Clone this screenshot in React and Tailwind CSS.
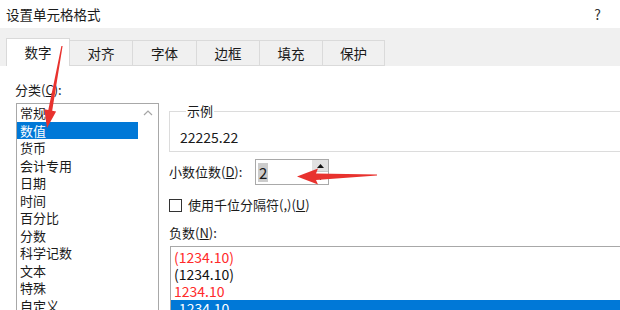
import React from 'react'

const categories = ['常规', '数值', '货币', '会计专用', '日期', '时间', '百分比', '分数', '科学记数', '文本', '特殊', '自定义']
const tabs = [
    { label: '对齐', w: 'w-[63px]' },
    { label: '字体', w: 'w-[64px]' },
    { label: '边框', w: 'w-[63px]' },
    { label: '填充', w: 'w-[63px]' },
    { label: '保护', w: 'w-[62px]' },
]
const negatives = [
    { text: '(1234.10)', cls: 'text-[#ff2a2a]' },
    { text: '(1234.10)', cls: 'text-[#111]' },
    { text: '1234.10', cls: 'text-[#ff2a2a]' },
    { text: '-1234.10', cls: 'text-white bg-[#0078d7]' },
]

export default function App() {
    return (
        <div className="relative w-[620px] h-[310px] overflow-hidden bg-white text-[#1a1a1a] text-[13px] font-['Noto_Sans_CJK_SC',sans-serif]">
            {/* 标题栏 */}
            <div className="h-[28px] flex items-center justify-between pl-[6px] pr-[19px]">
                <span className="text-[13.5px]">设置单元格格式</span>
                <span className="text-[14px] text-[#333]">?</span>
            </div>

            {/* 选项卡 */}
            <div className="h-[38px] bg-[#f0f0f0] flex items-end pl-[6px]">
                <div className="w-[64px] h-[28px] bg-white border border-b-0 border-[#d9d9d9] flex items-center justify-center text-[13.5px]">
                    数字
                </div>
                {tabs.map((t) => (
                    <div key={t.label} className={`${t.w} h-[26px] border border-l-0 border-[#dadada] bg-[#f0f0f0] flex items-center justify-center text-[13.5px]`}>
                        {t.label}
                    </div>
                ))}
            </div>

            {/* 内容 */}
            <div className="flex">
                <div className="shrink-0 pl-[15px] pt-[15px]">
                    <div className="h-[18px] leading-[18px]">
                        分类(<span className="underline">C</span>):
                    </div>
                    <div className="ml-[1px] mt-[4px] w-[143px] h-[220px] border border-[#a8a8a8] flex">
                        <div className="w-[121px]">
                            {categories.map((c, i) => (
                                <div
                                    key={c}
                                    className={`h-[17.5px] leading-[17.5px] pl-[3px] ${i === 1 ? 'bg-[#0078d7] text-white' : ''}`}
                                >
                                    {c}
                                </div>
                            ))}
                        </div>
                        <div className="flex-1 flex justify-center pt-[6px]">
                            <svg width="10" height="6" viewBox="0 0 10 6">
                                <polyline points="1,5 5,1 9,5" fill="none" stroke="#a6a6a6" strokeWidth="1.2" />
                            </svg>
                        </div>
                    </div>
                </div>

                <div className="shrink-0 w-[470px] ml-[10px] pt-[36px]">
                    <fieldset className="border border-[#dcdcdc] h-[50px] pl-[10px]">
                        <legend className="ml-[6px] px-[1px] leading-[18px]">示例</legend>
                        <div className="mt-[8px] leading-[18px] text-[14px]">22225.22</div>
                    </fieldset>

                    <div className="mt-[7px] flex items-center h-[26px]">
                        <span className="w-[86px]">
                            小数位数(<span className="underline">D</span>):
                        </span>
                        <div className="w-[74px] h-[26px] border border-[#a9a9a9] flex">
                            <div className="flex-1 flex items-center pl-[2px]">
                                <span className="bg-[#cccccc] px-[1px] leading-[19px] text-[15px]">2</span>
                            </div>
                            <div className="w-[16px] flex flex-col">
                                <div className="h-[12px] bg-[#e1e1e1] border-b border-[#c9c9c9] flex items-center justify-center">
                                    <svg width="7" height="4" viewBox="0 0 7 4"><polygon points="0,4 3.5,0 7,4" fill="#111" /></svg>
                                </div>
                                <div className="flex-1 flex items-center justify-center">
                                    <svg width="7" height="4" viewBox="0 0 7 4"><polygon points="0,0 3.5,4 7,0" fill="#111" /></svg>
                                </div>
                            </div>
                        </div>
                    </div>

                    <div className="mt-[13px] flex items-center h-[14px]">
                        <span className="w-[13px] h-[13px] border border-[#333] bg-white" />
                        <span className="ml-[6px]">
                            使用千位分隔符(,)(<span className="underline">U</span>)
                        </span>
                    </div>

                    <div className="mt-[12px] h-[18px] leading-[18px]">
                        负数(<span className="underline">N</span>):
                    </div>
                    <div className="mt-[4px] ml-[1px] h-[80px] border border-[#a8a8a8] pt-[2px]">
                        {negatives.map((n, i) => (
                            <div key={i} className={`h-[17px] leading-[17px] pl-[3px] text-[14px] ${n.cls}`}>
                                {n.text}
                            </div>
                        ))}
                    </div>
                </div>
            </div>

            {/* 红色箭头标注 */}
            <svg className="absolute inset-0 pointer-events-none" width="620" height="310" viewBox="0 0 620 310">
                <polygon
                    points="62.6,46.1 52.2,110.7 56.1,111.4 47,128 44.3,109.2 48.3,109.9 61.4,45.9"
                    fill="#e8322e"
                />
                <polygon
                    points="297,176.5 318,168.5 316,173.5 377,174.6 377,175.6 316,180 318,184.5"
                    fill="#e8322e"
                />
            </svg>
        </div>
    )
}
